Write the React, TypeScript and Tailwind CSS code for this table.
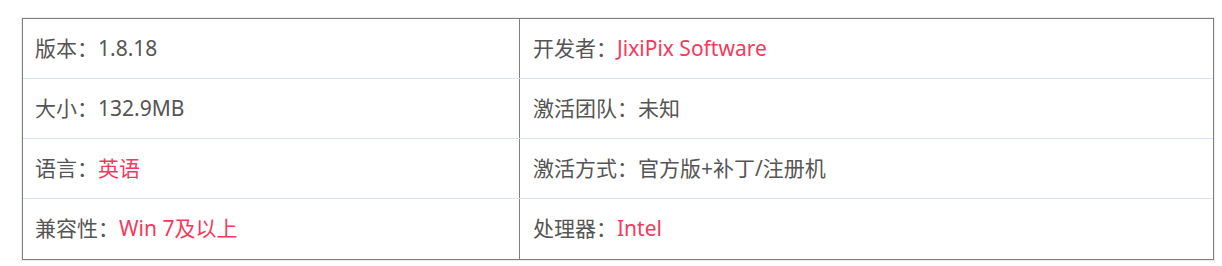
import React from "react";

const font = { fontFamily: '"Noto Sans", "Noto Sans CJK SC", sans-serif' };

function Cell({ label, value, red, left }: { label: string; value: string; red?: boolean; left?: boolean }) {
  return (
    <div className={`flex items-center h-full ${left ? "pl-[12px] border-r border-[#7f7f7f]" : "pl-[13px]"}`}>
      <span className="text-[#555555]">{label}：</span>
      <span className={red ? "text-[#f5395e]" : "text-[#555555]"}>{value}</span>
    </div>
  );
}

const rows: [string, string, boolean, string, string, boolean][] = [
  ["版本", "1.8.18", false, "开发者", "JixiPix Software", true],
  ["大小", "132.9MB", false, "激活团队", "未知", false],
  ["语言", "英语", true, "激活方式", "官方版+补丁/注册机", false],
  ["兼容性", "Win 7及以上", true, "处理器", "Intel", true],
];

export default function App() {
  return (
    <div className="w-[1222px] h-[266px] bg-white pt-[17px] pl-[21px]" style={font}>
      <div className="w-[1194px] border border-[#ececec]">
        <div className="border border-[#7f7f7f] text-[21px]">
          {rows.map((r, i) => (
            <div
              key={i}
              className={`grid grid-cols-[497px_1fr] h-[60px] ${i < rows.length - 1 ? "border-b border-[#d6e4fb]" : ""}`}
            >
              <Cell label={r[0]} value={r[1]} red={r[2]} left />
              <Cell label={r[3]} value={r[4]} red={r[5]} />
            </div>
          ))}
        </div>
      </div>
    </div>
  );
}
